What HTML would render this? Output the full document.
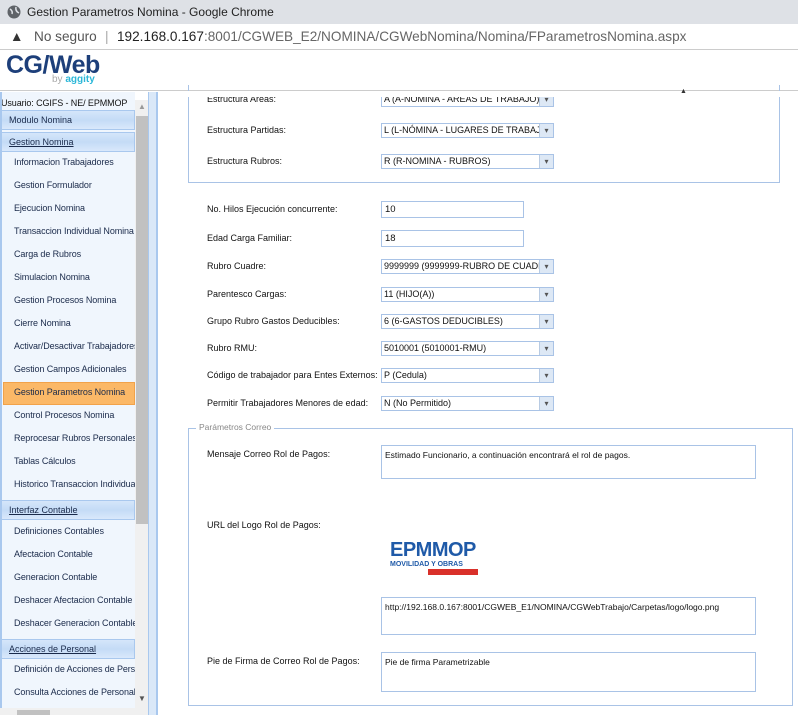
<!DOCTYPE html>
<html><head><meta charset="utf-8"><style>
*{box-sizing:border-box;margin:0;padding:0}
body{width:798px;height:715px;overflow:hidden;background:#fff;font-family:"Liberation Sans",Tahoma,sans-serif;font-size:11px;color:#111;position:relative}
.abs{position:absolute}
.title{left:0;top:0;width:798px;height:24px;background:#dee1e6;font-size:12px;line-height:24px;padding-left:27px;color:#222}
.addr{left:0;top:24px;width:798px;height:26px;background:#fff;border-bottom:1px solid #ccc;font-size:13.6px;line-height:26px;color:#333}
.hdr{left:0;top:50px;width:798px;height:41px;border-bottom:1px solid #ccc}
.side{left:0;top:92px;width:135px;height:623px;background:#f0f6fd;overflow:hidden}
.it{position:absolute;left:14px;font-size:9px;letter-spacing:-0.1px;color:#1a2a4a;white-space:nowrap}
.hd{position:absolute;left:1px;width:134px;height:20px;background:linear-gradient(#d5e6fa,#c4dbf6 50%,#d9e8fb);border:1px solid #a9c8ee;font-size:9px;padding-left:7px;line-height:18px;color:#1a2a4a}
.lab{position:absolute;left:207px;font-size:9px;color:#111;white-space:nowrap}
.sel{position:absolute;left:381px;width:173px;height:15px;border:1px solid #a9c3e6;font-size:9px;line-height:13px;padding-left:2px;white-space:nowrap;overflow:hidden;background:#fff}
.sel:after{content:"▾";position:absolute;right:0;top:0;width:13px;height:13px;background:#dde8f5;border-left:1px solid #b8cbe3;font-size:8px;text-align:center;line-height:13px;color:#555}
.inp{position:absolute;left:381px;width:143px;height:17px;border:1px solid #a9c3e6;font-size:9.5px;line-height:15px;padding-left:3px}
.ta{position:absolute;left:381px;width:375px;border:1px solid #a9c3e6;font-size:8.5px;padding:4px 3px}
</style></head><body>
<div class="abs title">Gestion Parametros Nomina - Google Chrome</div>
<svg class="abs" style="left:7px;top:5px" width="14" height="14"><circle cx="7" cy="7" r="6.5" fill="#5f6368"/><path d="M3 4 Q6 6 5 9 M9 2 Q8 6 12 8" stroke="#dee1e6" stroke-width="1.5" fill="none"/></svg>
<div class="abs addr"><span style="position:absolute;left:10px;top:0">▲</span><span style="position:absolute;left:34px;color:#555">No seguro</span><span style="position:absolute;left:105px;color:#aaa">|</span><span style="position:absolute;left:117px;color:#222">192.168.0.167<span style="color:#666">:8001/CGWEB_E2/NOMINA/CGWebNomina/Nomina/FParametrosNomina.aspx</span></span></div>
<div class="abs hdr"><div style="position:absolute;left:6px;top:1px;font-size:25px;font-weight:bold;color:#1d3f7a;letter-spacing:-0.5px">CG/Web</div><div style="position:absolute;left:52px;top:24px;font-size:10px;color:#aaa">by <span style="color:#2bb7d8;font-weight:bold">aggity</span></div></div>
<div class="abs side">
<div class="it" style="left:1px;top:6px;color:#111">Usuario: CGIFS - NE/ EPMMOP</div>
<div class="hd" style="top:18px">Modulo Nomina</div>
<div class="hd" style="top:40px;text-decoration:underline">Gestion Nomina</div>
<div class="it" style="top:65px">Informacion Trabajadores</div>
<div class="it" style="top:88px">Gestion Formulador</div>
<div class="it" style="top:111px">Ejecucion Nomina</div>
<div class="it" style="top:134px">Transaccion Individual Nomina</div>
<div class="it" style="top:157px">Carga de Rubros</div>
<div class="it" style="top:180px">Simulacion Nomina</div>
<div class="it" style="top:203px">Gestion Procesos Nomina</div>
<div class="it" style="top:226px">Cierre Nomina</div>
<div class="it" style="top:249px">Activar/Desactivar Trabajadores</div>
<div class="it" style="top:272px">Gestion Campos Adicionales</div>
<div style="position:absolute;left:3px;top:290px;width:132px;height:23px;background:#fbb867;border:1px solid #f1a24a"></div>
<div class="it" style="top:295px">Gestion Parametros Nomina</div>
<div class="it" style="top:318px">Control Procesos Nomina</div>
<div class="it" style="top:341px">Reprocesar Rubros Personales</div>
<div class="it" style="top:364px">Tablas Cálculos</div>
<div class="it" style="top:387px">Historico Transaccion Individual</div>
<div class="hd" style="top:408px;text-decoration:underline">Interfaz Contable</div>
<div class="it" style="top:434px">Definiciones Contables</div>
<div class="it" style="top:457px">Afectacion Contable</div>
<div class="it" style="top:480px">Generacion Contable</div>
<div class="it" style="top:503px">Deshacer Afectacion Contable</div>
<div class="it" style="top:526px">Deshacer Generacion Contable</div>
<div class="hd" style="top:547px;text-decoration:underline">Acciones de Personal</div>
<div class="it" style="top:572px">Definición de Acciones de Personal</div>
<div class="it" style="top:595px">Consulta Acciones de Personal</div>
</div>
<div class="abs" style="left:0;top:92px;width:2px;height:623px;background:#a9c8ee"></div>
<div class="abs" style="left:135px;top:100px;width:13px;height:615px;background:#f0f0f0"></div>
<div class="abs" style="left:136px;top:116px;width:12px;height:408px;background:#c1c1c1"></div>
<div class="abs" style="left:138px;top:102px;font-size:8px;color:#999">▲</div>
<div class="abs" style="left:138px;top:694px;font-size:8px;color:#555">▼</div>
<div class="abs" style="left:0;top:708px;width:135px;height:7px;background:#f0f0f0"></div>
<div class="abs" style="left:17px;top:710px;width:33px;height:5px;background:#c1c1c1"></div>
<div class="abs" style="left:148px;top:92px;width:9px;height:623px;background:#dae8f8;border-left:1px solid #a9c8ee;border-right:1px solid #a9c8ee"></div>
<div class="abs" style="left:157px;top:92px;width:1px;height:623px;background:#a9c8ee"></div>
<div class="abs" style="left:188px;top:85px;width:592px;height:98px;border:1px solid #a9c3e6;border-top:none"></div>
<div class="lab" style="top:94px">Estructura Areas:</div><div class="sel" style="top:92px">A (A-NOMINA - AREAS DE TRABAJO)</div>
<div class="abs" style="left:158px;top:91px;width:640px;height:6px;background:#fff"></div>
<div class="abs" style="left:680px;top:88px;font-size:7px;color:#333">▲</div>
<div class="lab" style="top:125px">Estructura Partidas:</div><div class="sel" style="top:123px">L (L-NÓMINA - LUGARES DE TRABAJO)</div>
<div class="lab" style="top:156px">Estructura Rubros:</div><div class="sel" style="top:154px">R (R-NOMINA - RUBROS)</div>
<div class="lab" style="top:204px">No. Hilos Ejecución concurrente:</div><div class="inp" style="top:201px">10</div>
<div class="lab" style="top:233px">Edad Carga Familiar:</div><div class="inp" style="top:230px">18</div>
<div class="lab" style="top:261px">Rubro Cuadre:</div><div class="sel" style="top:259px">9999999 (9999999-RUBRO DE CUADRE)</div>
<div class="lab" style="top:289px">Parentesco Cargas:</div><div class="sel" style="top:287px">11 (HIJO(A))</div>
<div class="lab" style="top:316px">Grupo Rubro Gastos Deducibles:</div><div class="sel" style="top:314px">6 (6-GASTOS DEDUCIBLES)</div>
<div class="lab" style="top:343px">Rubro RMU:</div><div class="sel" style="top:341px">5010001 (5010001-RMU)</div>
<div class="lab" style="top:370px">Código de trabajador para Entes Externos:</div><div class="sel" style="top:368px">P (Cedula)</div>
<div class="lab" style="top:398px">Permitir Trabajadores Menores de edad:</div><div class="sel" style="top:396px">N (No Permitido)</div>
<div class="abs" style="left:188px;top:428px;width:605px;height:278px;border:1px solid #a9c3e6"></div>
<div class="abs" style="left:196px;top:422px;background:#fff;padding:0 3px;font-size:8.5px;color:#888">Parámetros Correo</div>
<div class="lab" style="top:449px">Mensaje Correo Rol de Pagos:</div>
<div class="ta" style="top:445px;height:34px">Estimado Funcionario, a continuación encontrará el rol de pagos.</div>
<div class="lab" style="top:520px">URL del Logo Rol de Pagos:</div>
<div class="abs" style="left:390px;top:540px;font-size:20px;font-weight:bold;color:#1f5aa8;letter-spacing:-0.5px;line-height:20px">EPMMOP</div>
<div class="abs" style="left:390px;top:561px;font-size:7px;font-weight:bold;color:#1f5aa8;line-height:8px">MOVILIDAD Y OBRAS</div>
<div class="abs" style="left:428px;top:569px;width:50px;height:6px;background:#d9302a"></div>
<div class="ta" style="top:597px;height:38px">http://192.168.0.167:8001/CGWEB_E1/NOMINA/CGWebTrabajo/Carpetas/logo/logo.png</div>
<div class="lab" style="top:656px">Pie de Firma de Correo Rol de Pagos:</div>
<div class="ta" style="top:652px;height:40px">Pie de firma Parametrizable</div>
</body></html>
